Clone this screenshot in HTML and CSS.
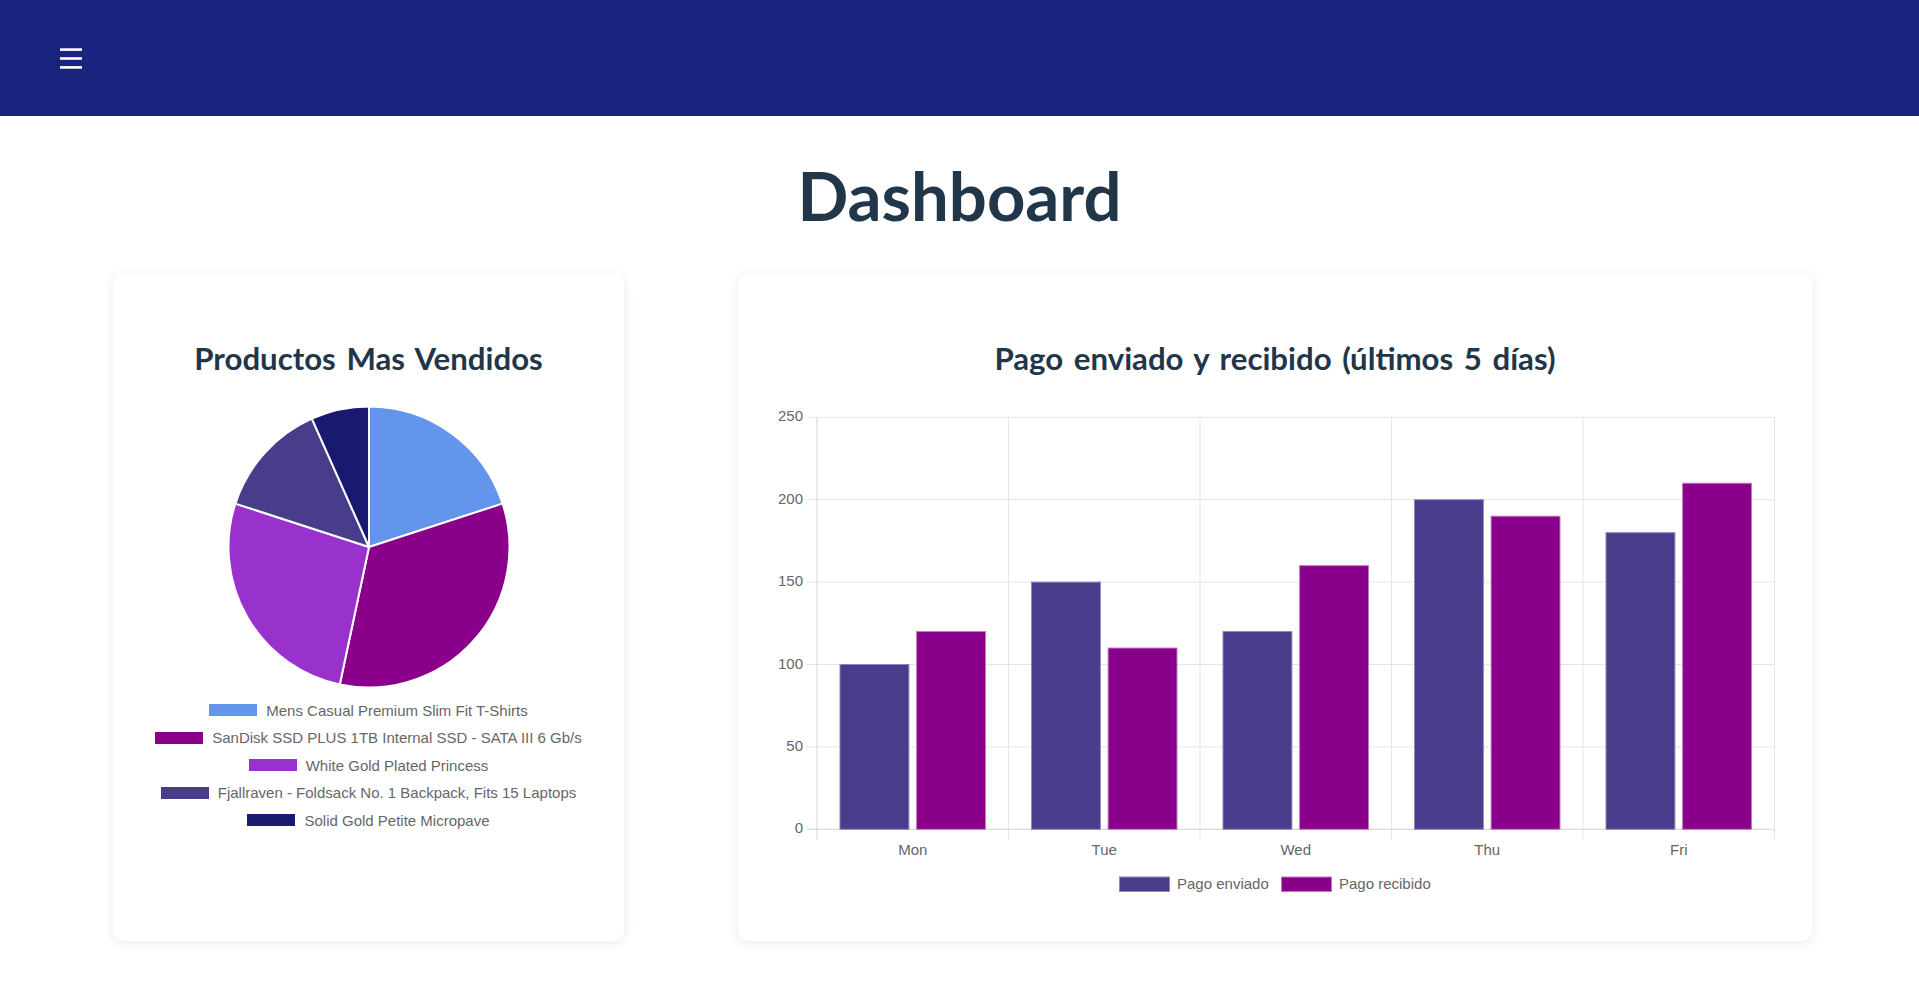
FILE: index.html
```html
<!DOCTYPE html>
<html lang="es">
<head>
<meta charset="utf-8">
<title>Dashboard</title>
<link rel="stylesheet" href="styles.css">
</head>
<body>
<header class="topbar">
  <button class="menu-btn" aria-label="menu">
    <svg width="22" height="21" viewBox="0 0 22 21"><rect x="0" y="0.3" width="22" height="2.6" fill="#fff"/><rect x="0" y="9.2" width="22" height="2.6" fill="#fff"/><rect x="0" y="18.1" width="22" height="2.6" fill="#fff"/></svg>
  </button>
</header>
<main class="main">
  <h1 class="page-title">Dashboard</h1>
  <div class="cards">
    <section class="card card-pie">
      <h2 class="card-title">Productos Mas Vendidos</h2>
      <svg class="pie" width="290" height="290" viewBox="0 0 290 290">
        <g stroke="#fff" stroke-width="2" stroke-linejoin="round">
          <path d="M145,145 L145,4.5 A140.5,140.5 0 0 1 278.62,101.58 Z" fill="#6495ED"/>
          <path d="M145,145 L278.62,101.58 A140.5,140.5 0 0 1 115.79,282.43 Z" fill="#8B008B"/>
          <path d="M145,145 L115.79,282.43 A140.5,140.5 0 0 1 11.38,101.58 Z" fill="#9932CC"/>
          <path d="M145,145 L11.38,101.58 A140.5,140.5 0 0 1 87.85,16.65 Z" fill="#483D8B"/>
          <path d="M145,145 L87.85,16.65 A140.5,140.5 0 0 1 145,4.5 Z" fill="#191970"/>
        </g>
      </svg>
      <ul class="pie-legend">
        <li class="legend-row"><span class="swatch sw-1"></span><span class="legend-text">Mens Casual Premium Slim Fit T-Shirts</span></li>
        <li class="legend-row"><span class="swatch sw-2"></span><span class="legend-text">SanDisk SSD PLUS 1TB Internal SSD - SATA III 6 Gb/s</span></li>
        <li class="legend-row"><span class="swatch sw-3"></span><span class="legend-text">White Gold Plated Princess</span></li>
        <li class="legend-row"><span class="swatch sw-4"></span><span class="legend-text">Fjallraven - Foldsack No. 1 Backpack, Fits 15 Laptops</span></li>
        <li class="legend-row"><span class="swatch sw-5"></span><span class="legend-text">Solid Gold Petite Micropave</span></li>
      </ul>
    </section>
    <section class="card card-bar">
      <h2 class="card-title">Pago enviado y recibido (últimos 5 días)</h2>
      <svg class="bar-chart" width="1040" height="510" viewBox="0 0 1040 510">
        <g stroke="#e5e5e5" stroke-width="1">
          <line x1="47" y1="346.9" x2="1014.5" y2="346.9"/>
          <line x1="47" y1="264.5" x2="1014.5" y2="264.5"/>
          <line x1="47" y1="182.1" x2="1014.5" y2="182.1"/>
          <line x1="47" y1="99.7" x2="1014.5" y2="99.7"/>
          <line x1="47" y1="17.3" x2="1014.5" y2="17.3"/>
          <line x1="248.5" y1="17.3" x2="248.5" y2="439.3"/>
          <line x1="440" y1="17.3" x2="440" y2="439.3"/>
          <line x1="631.5" y1="17.3" x2="631.5" y2="439.3"/>
          <line x1="823" y1="17.3" x2="823" y2="439.3"/>
          <line x1="1014.5" y1="17.3" x2="1014.5" y2="439.3"/>
        </g>
        <g stroke="#d3d3d3" stroke-width="1">
          <line x1="57" y1="17.3" x2="57" y2="439.3"/>
          <line x1="47" y1="429.3" x2="1014.5" y2="429.3"/>
        </g>
        <g class="bars" stroke-width="1">
          <rect x="80" y="264.5" width="68.9" height="164.8" fill="#483D8B" stroke="#8e86c0"/>
          <rect x="156.6" y="231.54" width="68.9" height="197.76" fill="#8B008B" stroke="#c17ac1"/>
          <rect x="271.5" y="182.1" width="68.9" height="247.2" fill="#483D8B" stroke="#8e86c0"/>
          <rect x="348.1" y="248.02" width="68.9" height="181.28" fill="#8B008B" stroke="#c17ac1"/>
          <rect x="463" y="231.54" width="68.9" height="197.76" fill="#483D8B" stroke="#8e86c0"/>
          <rect x="539.6" y="165.62" width="68.9" height="263.68" fill="#8B008B" stroke="#c17ac1"/>
          <rect x="654.5" y="99.7" width="68.9" height="329.6" fill="#483D8B" stroke="#8e86c0"/>
          <rect x="731.1" y="116.18" width="68.9" height="313.12" fill="#8B008B" stroke="#c17ac1"/>
          <rect x="846" y="132.66" width="68.9" height="296.64" fill="#483D8B" stroke="#8e86c0"/>
          <rect x="922.6" y="83.22" width="68.9" height="346.08" fill="#8B008B" stroke="#c17ac1"/>
        </g>
        <g class="tick-labels" text-anchor="end">
          <text x="43" y="433.3">0</text>
          <text x="43" y="350.9">50</text>
          <text x="43" y="268.5">100</text>
          <text x="43" y="186.1">150</text>
          <text x="43" y="103.7">200</text>
          <text x="43" y="21.3">250</text>
        </g>
        <g class="tick-labels" text-anchor="middle">
          <text x="152.75" y="454.5">Mon</text>
          <text x="344.25" y="454.5">Tue</text>
          <text x="535.75" y="454.5">Wed</text>
          <text x="727.25" y="454.5">Thu</text>
          <text x="918.75" y="454.5">Fri</text>
        </g>
        <g class="tick-labels">
          <rect x="359.5" y="477" width="50" height="14.5" fill="#483D8B" stroke="#8e86c0"/>
          <text x="417" y="488.5">Pago enviado</text>
          <rect x="521.5" y="477" width="50" height="14.5" fill="#8B008B" stroke="#c17ac1"/>
          <text x="579" y="488.5">Pago recibido</text>
        </g>
      </svg>
    </section>
  </div>
</main>
</body>
</html>
```

FILE: styles.css
```css
* { box-sizing: border-box; }

html, body {
  margin: 0;
  padding: 0;
  background: #ffffff;
}

body {
  font-family: "Liberation Sans", Arial, sans-serif;
  color: #666666;
}

.topbar {
  height: 116px;
  background: #1a237e;
  display: flex;
  align-items: center;
  padding-left: 60px;
}

.menu-btn {
  background: none;
  border: 0;
  padding: 0;
  margin: 0;
  display: flex;
  cursor: pointer;
}

.main {
  padding-bottom: 40px;
}

.page-title {
  font-family: Lato, "Open Sans", sans-serif;
  font-weight: 700;
  font-size: 67px;
  line-height: 80px;
  margin: 38.5px 0;
  text-align: center;
  color: #22364a;
}

.cards {
  display: flex;
  gap: 114px;
  padding: 0 107px 0 113px;
  align-items: stretch;
}

.card {
  background: #ffffff;
  border-radius: 10px;
  box-shadow: 0 2px 12px rgba(0, 0, 0, 0.09);
  padding-top: 65px;
  display: flex;
  flex-direction: column;
  align-items: center;
}

.card-pie {
  width: 511px;
  flex: 0 0 511px;
}

.card-bar {
  flex: 1 1 auto;
  padding-bottom: 31px;
  align-items: flex-start;
}

.card-title {
  font-family: Lato, "Open Sans", sans-serif;
  font-weight: 700;
  font-size: 31.2px;
  line-height: 40px;
  word-spacing: 3px;
  margin: 0;
  color: #22364a;
  text-align: center;
  align-self: stretch;
}

.pie {
  display: block;
  margin-top: 24px;
}

.pie-legend {
  list-style: none;
  margin: 4.5px 0 0;
  padding: 0;
  display: flex;
  flex-direction: column;
  align-items: center;
}

.legend-row {
  height: 27.5px;
  display: flex;
  align-items: center;
  gap: 9px;
  font-size: 15px;
  color: #666666;
}

.swatch {
  display: block;
  width: 48px;
  height: 12px;
}

.sw-1 { background: #6495ED; }
.sw-2 { background: #8B008B; }
.sw-3 { background: #9932CC; }
.sw-4 { background: #483D8B; }
.sw-5 { background: #191970; }

.bar-chart {
  display: block;
  margin-top: 22px;
  margin-left: 22px;
}

.tick-labels {
  font-family: "Liberation Sans", Arial, sans-serif;
  font-size: 15px;
  fill: #666666;
}
```
